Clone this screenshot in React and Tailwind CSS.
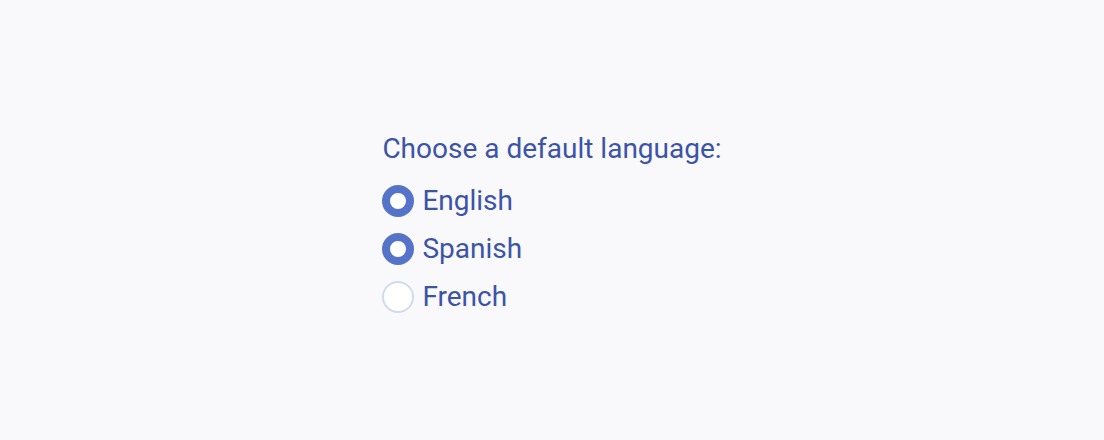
import React, { useState } from 'react'

const languages = ['English', 'Spanish', 'French']

const Radio = ({ label, checked, onSelect }) => (
    <label className="flex items-center gap-2 h-12 cursor-pointer">
        <input type="radio" className="sr-only" checked={checked} onChange={onSelect} />
        <span
            className={
                checked
                    ? 'w-8 h-8 rounded-full bg-white border-8 border-[#5573c9]'
                    : 'w-8 h-8 rounded-full bg-white border-2 border-[#d3d9f0]'
            }
        />
        <span className="text-[28px] leading-none">{label}</span>
    </label>
)

export default function App() {
    const [selected, setSelected] = useState({ English: true, Spanish: true, French: false })

    return (
        <div
            className="w-full h-screen pt-4 flex items-center justify-center bg-[#f9f9fb] text-[#3b54a8]"
            style={{ fontFamily: 'Roboto, sans-serif' }}
        >
            <div className="flex flex-col">
                <p className="text-[28px] leading-none mb-[14px]">Choose a default language:</p>
                <div className="flex flex-col">
                    {languages.map((lang) => (
                        <Radio
                            key={lang}
                            label={lang}
                            checked={selected[lang]}
                            onSelect={() => setSelected({ ...selected, [lang]: !selected[lang] })}
                        />
                    ))}
                </div>
            </div>
        </div>
    )
}
